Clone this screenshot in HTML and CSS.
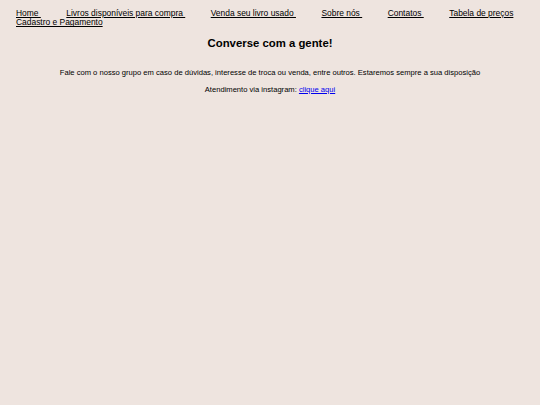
FILE: index.html
```html
<!DOCTYPE html>
<html lang="pt">
<head>
<meta charset="utf-8">
<title>Contatos</title>
<link rel="stylesheet" href="styles.css">
</head>
<body>
<nav class="menu">
<a href="#">Home </a><a href="#">Livros disponíveis para compra </a><a href="#">Venda seu livro usado </a><a href="#">Sobre nós </a><a href="#">Contatos </a><a href="#">Tabela de preços</a><a href="#">Cadastro e Pagamento</a>
</nav>
<main class="content">
<h1 class="title">Converse com a gente!</h1>
<p class="text">Fale com o nosso grupo em caso de dúvidas, interesse de troca ou venda, entre outros. Estaremos sempre a sua disposição</p>
<p class="text">Atendimento via instagram: <a class="link" href="#">clique aqui</a></p>
</main>
</body>
</html>
```
FILE: styles.css
```css
html, body {
  margin: 0;
  padding: 0;
  background: #eee4df;
  font-family: "Liberation Sans", Arial, sans-serif;
  color: #000;
}
.menu {
  padding: 9px 16px 0 16px;
  font-size: 8.43px;
  line-height: 9.4px;
  display: flex;
  flex-wrap: wrap;
  column-gap: 25.5px;
}
.menu a {
  color: #000;
  text-decoration: underline;
  white-space: pre;
}
.content {
  text-align: center;
}
.title {
  font-size: 11.36px;
  font-weight: bold;
  margin: 9px 0 0 0;
  line-height: 13px;
}
.text {
  font-size: 7.6px;
  line-height: 9px;
  margin: 18px 0 0 0;
}
.text + .text {
  margin-top: 8px;
}
.link {
  color: #0000ee;
}
```
